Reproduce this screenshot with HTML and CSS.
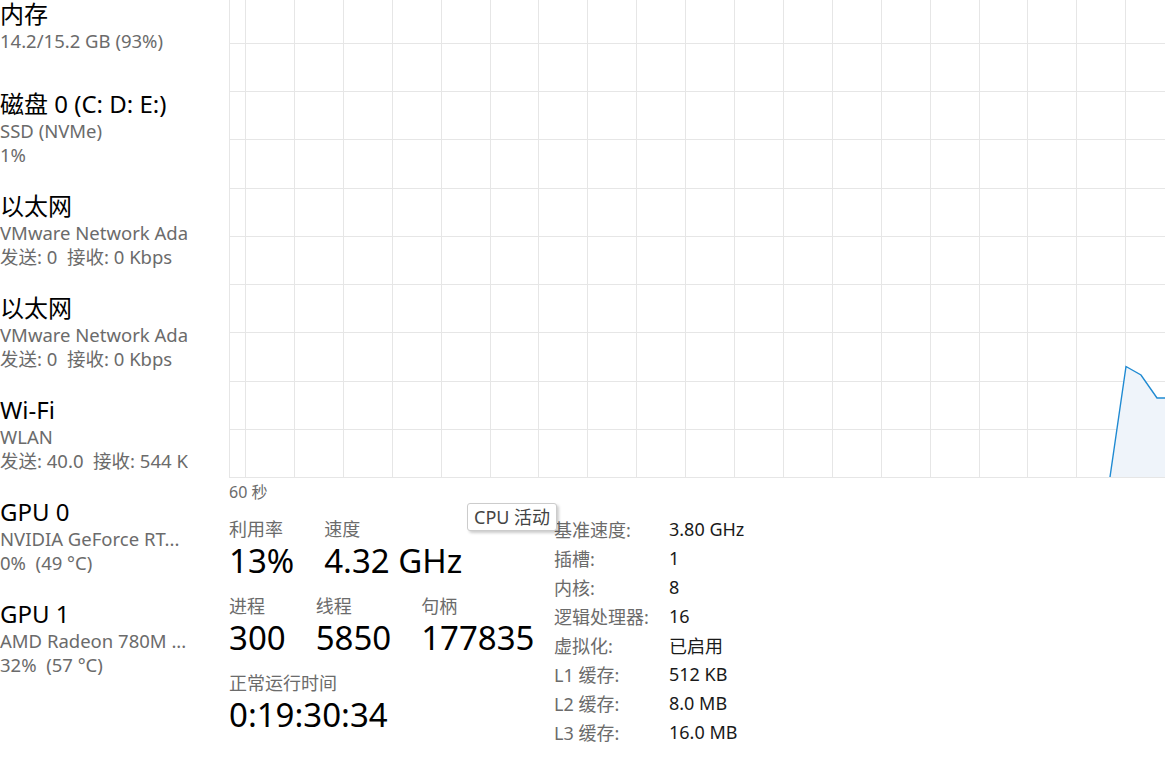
FILE: index.html
```html
<!DOCTYPE html>
<html lang="zh-CN">
<head>
    <meta charset="UTF-8">
    <meta name="viewport" content="width=device-width, initial-scale=1.0">
    <title>任务管理器 - CPU</title>
    <link rel="stylesheet" href="styles.css">
</head>
<body>
    <div class="sidebar">
        <div class="item">
            <div class="item-title">内存</div>
            <div class="item-sub">14.2/15.2 GB (93%)</div>
        </div>
        <div class="item">
            <div class="item-title">磁盘 0 (C: D: E:)</div>
            <div class="item-sub">SSD (NVMe)</div>
            <div class="item-sub">1%</div>
        </div>
        <div class="item">
            <div class="item-title">以太网</div>
            <div class="item-sub">VMware Network Adapter VMnet1</div>
            <div class="item-sub">发送: 0 &nbsp;接收: 0 Kbps</div>
        </div>
        <div class="item">
            <div class="item-title">以太网</div>
            <div class="item-sub">VMware Network Adapter VMnet8</div>
            <div class="item-sub">发送: 0 &nbsp;接收: 0 Kbps</div>
        </div>
        <div class="item">
            <div class="item-title">Wi-Fi</div>
            <div class="item-sub">WLAN</div>
            <div class="item-sub">发送: 40.0 &nbsp;接收: 544 Kbps</div>
        </div>
        <div class="item">
            <div class="item-title">GPU 0</div>
            <div class="item-sub">NVIDIA GeForce RT...</div>
            <div class="item-sub">0% &nbsp;(49 °C)</div>
        </div>
        <div class="item">
            <div class="item-title">GPU 1</div>
            <div class="item-sub">AMD Radeon 780M ...</div>
            <div class="item-sub">32% &nbsp;(57 °C)</div>
        </div>
    </div>

    <div class="main">
        <svg class="graph" width="936" height="478" viewBox="0 0 936 478">
            <path class="grid" d="M0.5 0V478
                M16.5 0V477 M65.5 0V477 M114.5 0V477 M163.5 0V477 M212.5 0V477 M261.5 0V477
                M309.5 0V477 M358.5 0V477 M407.5 0V477 M456.5 0V477 M505.5 0V477 M554.5 0V477
                M603.5 0V477 M652.5 0V477 M701.5 0V477 M750.5 0V477 M798.5 0V477 M847.5 0V477 M896.5 0V477
                M0 43.5H936 M0 91.5H936 M0 139.5H936 M0 188.5H936 M0 236.5H936
                M0 284.5H936 M0 332.5H936 M0 381.5H936 M0 429.5H936 M0 477.5H936"/>
            <polygon class="area" points="881,477 897,366.5 912,375 928,398 936,398 936,477"/>
            <polyline class="line" points="881,477 897,366.5 912,375 928,398 936,398"/>
        </svg>
        <div class="axis-label">60 秒</div>

        <div class="details">
            <div class="stats">
                <div class="stat-row">
                    <div class="stat">
                        <div class="stat-label">利用率</div>
                        <div class="stat-value">13%</div>
                    </div>
                    <div class="stat">
                        <div class="stat-label">速度</div>
                        <div class="stat-value">4.32 GHz</div>
                    </div>
                </div>
                <div class="stat-row">
                    <div class="stat">
                        <div class="stat-label">进程</div>
                        <div class="stat-value">300</div>
                    </div>
                    <div class="stat">
                        <div class="stat-label">线程</div>
                        <div class="stat-value">5850</div>
                    </div>
                    <div class="stat">
                        <div class="stat-label">句柄</div>
                        <div class="stat-value">177835</div>
                    </div>
                </div>
                <div class="stat-row">
                    <div class="stat">
                        <div class="stat-label">正常运行时间</div>
                        <div class="stat-value">0:19:30:34</div>
                    </div>
                </div>
            </div>

            <div class="specs">
                <div class="spec-label">基准速度:</div><div class="spec-value">3.80 GHz</div>
                <div class="spec-label">插槽:</div><div class="spec-value">1</div>
                <div class="spec-label">内核:</div><div class="spec-value">8</div>
                <div class="spec-label">逻辑处理器:</div><div class="spec-value">16</div>
                <div class="spec-label">虚拟化:</div><div class="spec-value">已启用</div>
                <div class="spec-label">L1 缓存:</div><div class="spec-value">512 KB</div>
                <div class="spec-label">L2 缓存:</div><div class="spec-value">8.0 MB</div>
                <div class="spec-label">L3 缓存:</div><div class="spec-value">16.0 MB</div>
            </div>
        </div>
    </div>

    <div class="tooltip">CPU 活动</div>
</body>
</html>
```

FILE: styles.css
```css
body {
    font-family: "Noto Sans", "Noto Sans CJK SC", sans-serif;
    background-color: #ffffff;
    color: #000000;
    margin: 0;
    padding: 0;
    display: flex;
    height: 100vh;
    overflow: hidden;
}
.sidebar {
    width: 188px;
    margin-right: 41px;
    margin-top: -25px;
    overflow: hidden;
    white-space: nowrap;
    flex-shrink: 0;
}
.item {
    height: 102px;
    display: flex;
    flex-direction: column;
    justify-content: center;
}
.item-title {
    font-size: 24px;
    line-height: 30px;
}
.item-sub {
    font-size: 18.5px;
    line-height: 24px;
    color: #6b6b6b;
}
.main {
    flex: 1;
    min-width: 0;
    overflow: hidden;
}
.graph {
    display: block;
}
.grid {
    stroke: #e6e6e6;
    stroke-width: 1;
    fill: none;
}
.area {
    fill: #eff4fa;
}
.line {
    fill: none;
    stroke: #1f8ad2;
    stroke-width: 1.4;
}
.axis-label {
    margin-top: 2px;
    font-size: 16px;
    line-height: 24px;
    color: #6b6b6b;
}
.details {
    display: flex;
    margin-top: 13px;
}
.stats {
    width: 325px;
    display: flex;
    flex-direction: column;
    gap: 13px;
}
.stat-row {
    display: flex;
    gap: 30px;
}
.stat-label {
    font-size: 18px;
    line-height: 24px;
    color: #6b6b6b;
}
.stat-value {
    font-size: 33px;
    line-height: 40px;
}
.specs {
    margin-top: -3px;
    display: grid;
    grid-template-columns: 115px auto;
    grid-auto-rows: 29px;
    align-items: center;
    font-size: 18px;
}
.spec-label {
    color: #6b6b6b;
}
.spec-value {
    color: #1a1a1a;
}
.tooltip {
    position: absolute;
    left: 467px;
    top: 503px;
    height: 28px;
    padding: 0 6px;
    box-sizing: border-box;
    background: #ffffff;
    border: 1px solid #cccccc;
    border-radius: 3px;
    box-shadow: 2px 2px 3px rgba(0, 0, 0, 0.2);
    font-size: 18px;
    line-height: 26px;
    color: #444444;
    white-space: nowrap;
}
```
